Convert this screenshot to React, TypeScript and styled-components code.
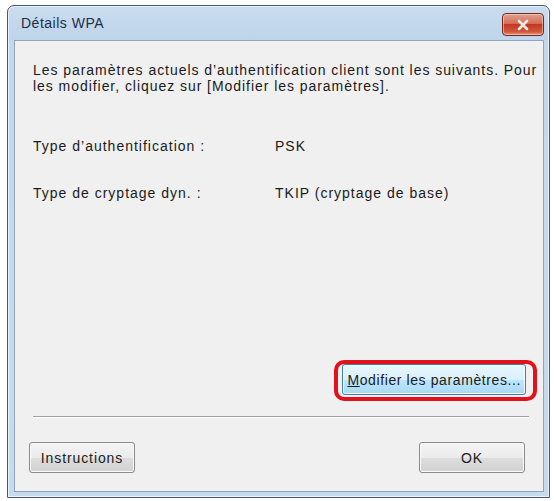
import styled, { createGlobalStyle } from 'styled-components';

const GlobalStyle = createGlobalStyle`
	html, body {
		margin: 0;
		padding: 0;
		background: #ffffff;
	}

	body {
		font-family: "Liberation Sans", Arial, sans-serif;
		font-size: 14px;
		color: #1b1b1b;
	}
`;

const ROWS = [
	{ label: 'Type d\u2019authentification :', value: 'PSK' },
	{ label: 'Type de cryptage dyn. :', value: 'TKIP (cryptage de base)' }
];

export default function App() {
	return (
		<>
			<GlobalStyle/>
			<Window>
				<TitleBar>
					<Title>Détails WPA</Title>
					<CloseButton aria-label="Fermer">
						<svg width="14" height="12" viewBox="0 0 14 12">
							<path d="M3 2 L11 10 M11 2 L3 10"
							      stroke="#ece6e4"
							      strokeWidth="2.6"
							      strokeLinecap="round"/>
						</svg>
					</CloseButton>
				</TitleBar>

				<Content>
					<Intro>
						Les paramètres actuels d’authentification client sont les suivants. Pour<br/>
						les modifier, cliquez sur [Modifier les paramètres].
					</Intro>

					<Details>
						{ROWS.map((row) => (
							<DetailRow key={row.label}>
								<span>{row.label}</span>
								<span>{row.value}</span>
							</DetailRow>
						))}
					</Details>

					<ModifyRow>
						<Highlight>
							<Button focused wide>
								<u>M</u>odifier les paramètres...
							</Button>
						</Highlight>
					</ModifyRow>

					<Separator/>

					<Footer>
						<Button>Instructions</Button>
						<Button>OK</Button>
					</Footer>
				</Content>
			</Window>
		</>
	);
}

const Window = styled.div`
    box-sizing: border-box;
    margin: 5px 0 0 7px;
    width: 543px;
    height: 493px;
    display: flex;
    flex-direction: column;
    padding: 0 5px 5px 6px;
    border: 1px solid #4b5868;
    border-radius: 7px 7px 0 0;
    background: linear-gradient(to bottom, #cadcef 0px, #bed4ea 34px, #c3d8ed 35px, #c7dbef 100%);
    box-shadow: inset 0 0 0 1px #e9f1fa;
`;

const TitleBar = styled.div`
    height: 34px;
    display: flex;
    align-items: center;
    justify-content: space-between;
    padding-left: 7px;
`;

const Title = styled.span`
    font-family: "Liberation Sans", Arial, sans-serif;
    font-size: 14px;
    color: #1d2f47;
    letter-spacing: 0.5px;
`;

const CloseButton = styled.div`
    box-sizing: border-box;
    width: 42px;
    height: 23px;
    margin-top: 3px;
    display: flex;
    align-items: center;
    justify-content: center;
    border: 1px solid #6d2b22;
    border-radius: 4px;
    background: linear-gradient(to bottom, #e2a08e 0%, #d46f57 45%, #c2371d 50%, #cf5a3d 85%, #e29a7e 100%);
    box-shadow: inset 0 0 0 1px rgba(255, 220, 210, 0.55);
`;

const Content = styled.div`
    flex: 1;
    display: flex;
    flex-direction: column;
    padding: 21px 17px 18px 18px;
    background: #f0f0f0;
    border: 1px solid #8fa5be;
`;

const Intro = styled.p`
    margin: 0;
    font-size: 14px;
    line-height: 16px;
    letter-spacing: 0.95px;
    white-space: nowrap;
`;

const Details = styled.div`
    display: flex;
    flex-direction: column;
    gap: 31px;
    margin-top: 44px;
`;

const DetailRow = styled.div`
    display: grid;
    grid-template-columns: 242px 1fr;
    font-size: 14px;
    line-height: 16px;
    letter-spacing: 1px;
`;

const ModifyRow = styled.div`
    margin-top: auto;
    margin-right: -11px;
    display: flex;
    justify-content: flex-end;
`;

const Highlight = styled.div`
    display: flex;
    padding: 0 7px 2px 4px;
    border: 4px solid #e2121c;
    border-radius: 10px;
`;

const Button = styled.button<{ focused?: boolean; wide?: boolean }>`
    box-sizing: border-box;
    height: 31px;
    min-width: ${p => p.wide ? 183 : 106}px;
    padding: 0 4px;
    font-family: "Liberation Sans", Arial, sans-serif;
    font-size: 14px;
    letter-spacing: ${p => p.wide ? 0.6 : 0.9}px;
    color: #1b1b1b;
    border-radius: 3px;
    border: 1px solid ${p => p.focused ? '#3c7fb1' : '#8a8a8a'};
    background: ${p => p.focused
	    ? 'linear-gradient(to bottom, #eaf6fd 0%, #d9f0fc 50%, #bee6fd 51%, #a7d9f5 100%)'
	    : 'linear-gradient(to bottom, #f4f4f4 0%, #ececec 50%, #dddddd 51%, #d2d2d2 100%)'};
    box-shadow: inset 0 0 0 1px ${p => p.focused ? '#f6fbfe' : '#fbfbfb'};

    u {
        text-decoration-thickness: 1px;
    }
`;

const Separator = styled.hr`
    margin: 15px 0 0 0;
    width: 496px;
    align-self: flex-start;
    border: none;
    border-top: 1px solid #a0a0a0;
    border-bottom: 1px solid #ffffff;
`;

const Footer = styled.div`
    display: flex;
    justify-content: space-between;
    margin-top: 24px;
    margin-left: -4px;
    margin-right: 1px;
`;
